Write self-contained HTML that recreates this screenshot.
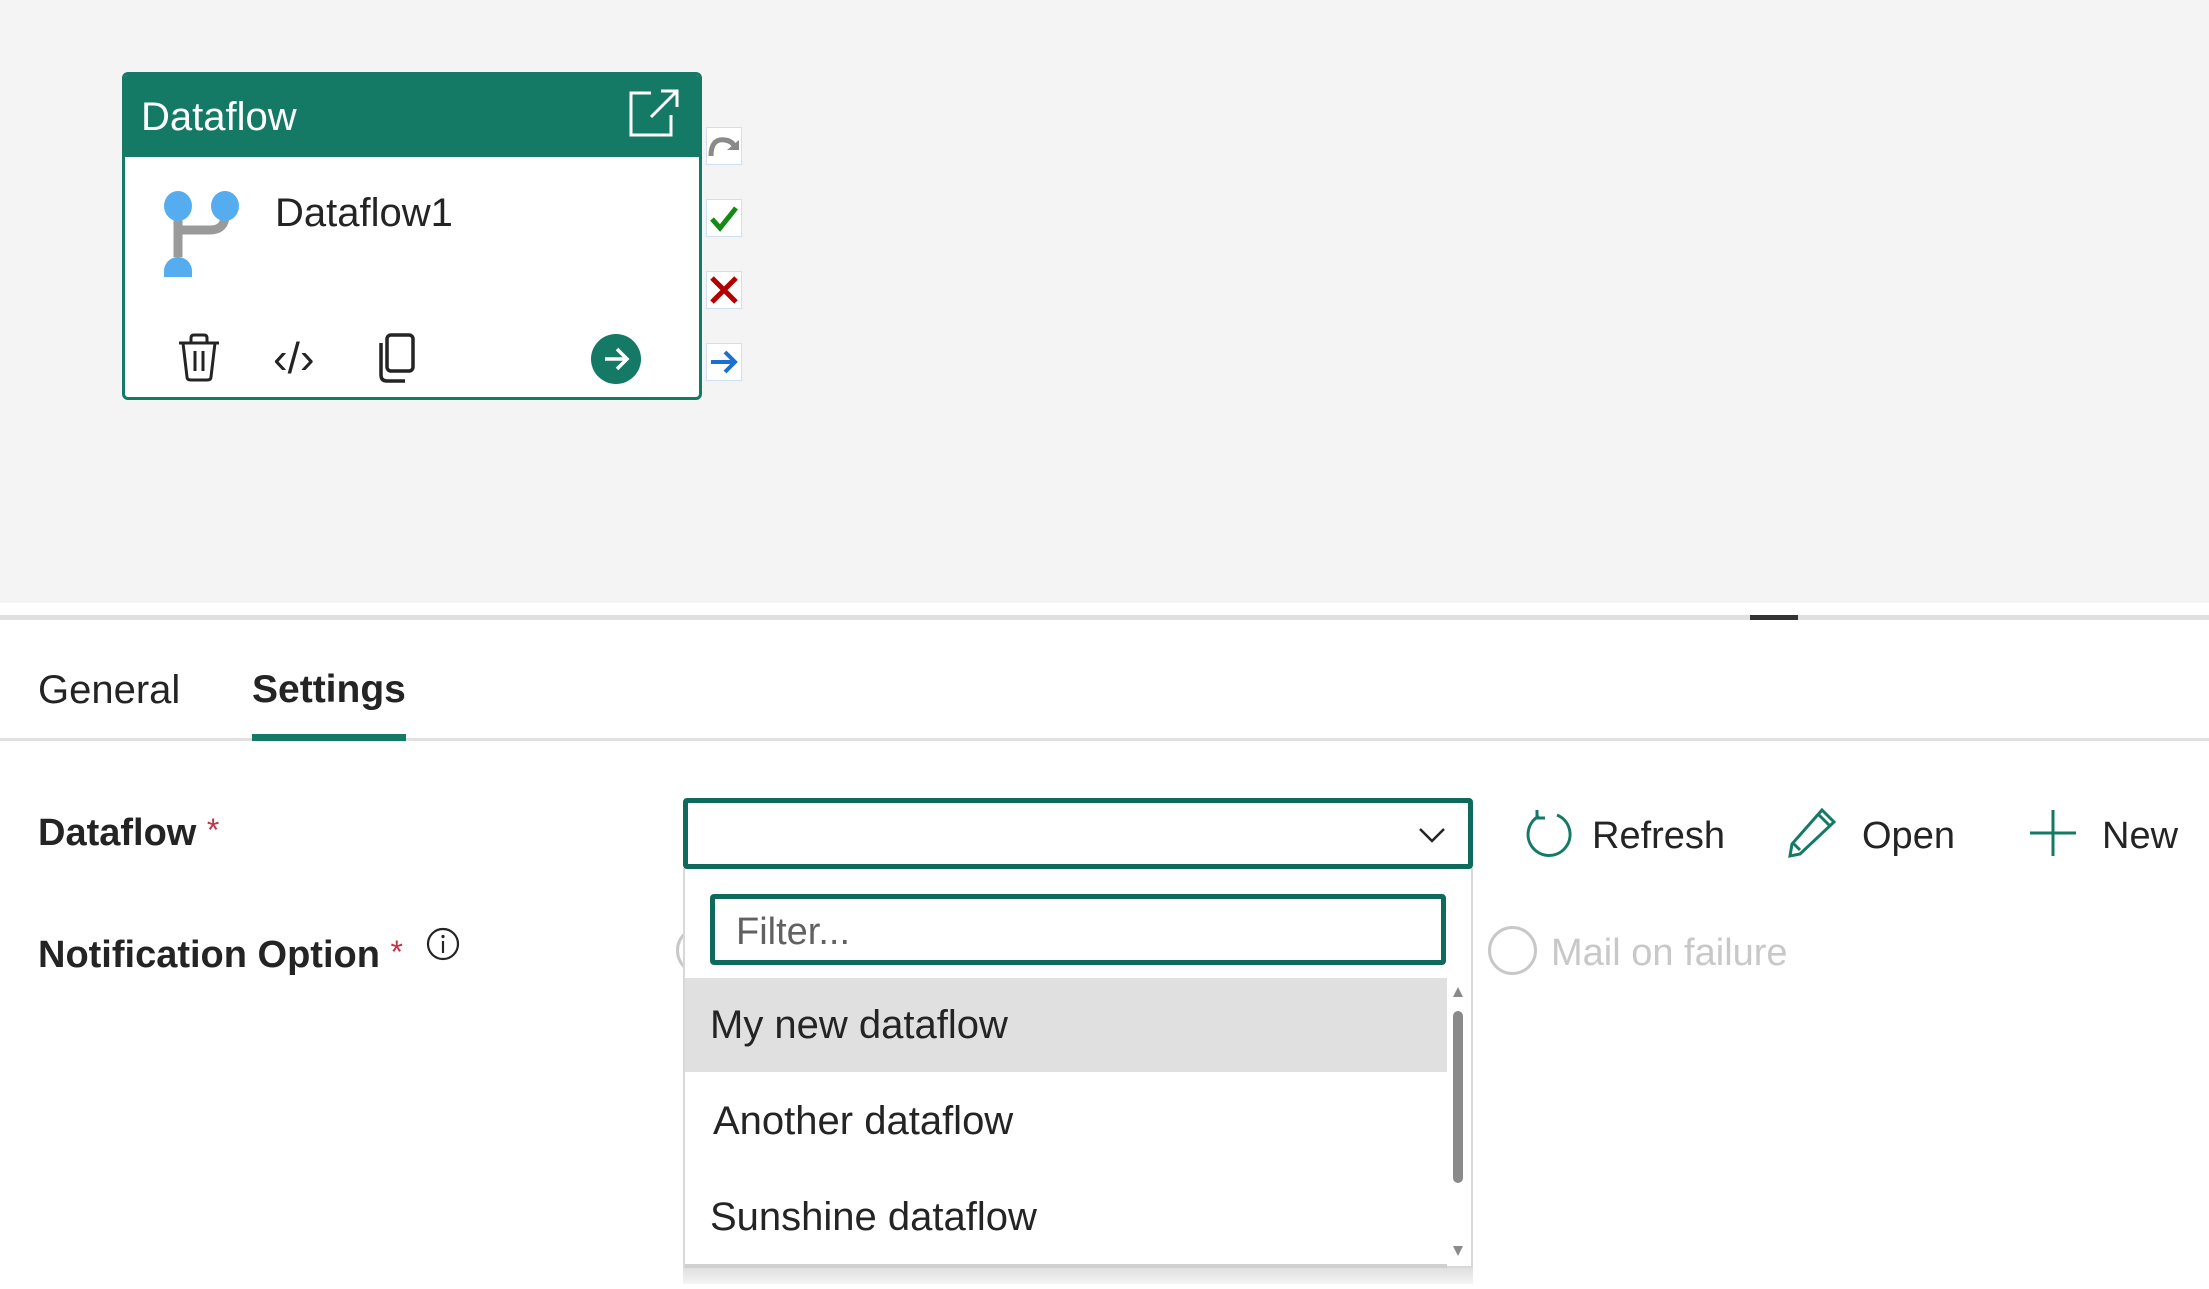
<!DOCTYPE html>
<html><head><meta charset="utf-8"><style>
*{margin:0;padding:0;box-sizing:border-box}
body{width:2209px;height:1289px;overflow:hidden;background:#fff;font-family:"Liberation Sans",sans-serif;position:relative;color:#242424}
.a{position:absolute}
.t{white-space:nowrap;line-height:1}
</style></head><body>
<div class="a" style="left:0;top:0;width:2209px;height:603px;background:#f4f4f4"></div>
<div class="a" style="left:0;top:615px;width:2209px;height:5px;background:#e0e0e0"></div>
<div class="a" style="left:1750px;top:615px;width:48px;height:5px;background:#333"></div>

<!-- card -->
<div class="a" style="left:122px;top:72px;width:580px;height:328px;border:3px solid #147a66;border-radius:6px;background:#fff;overflow:hidden">
 <div class="a" style="left:0;top:0;width:580px;height:82px;background:#147a66"></div>
 <div class="a t" style="left:16px;top:22px;font-size:40px;color:#fff">Dataflow</div>
 <svg class="a" style="left:502px;top:12px" width="56" height="52" viewBox="0 0 56 52"><path d="M24 6H4V48H44V28M24 30L50 4M34 4H50V20" fill="none" stroke="#fff" stroke-width="3"/></svg>
 <svg class="a" style="left:38px;top:110px" width="80" height="92" viewBox="0 0 80 92"><path d="M15 20V72M62 20V30Q62 45 47 45H15" fill="none" stroke="#9a9a9a" stroke-width="9"/><ellipse cx="15" cy="21" rx="14" ry="15" fill="#55adf0"/><ellipse cx="62" cy="21" rx="14" ry="15" fill="#55adf0"/><path d="M1 86a14 14 0 0 1 28 0v6H1z" fill="#55adf0"/></svg>
 <div class="a t" style="left:150px;top:118px;font-size:40px;color:#242424">Dataflow1</div>
 <svg class="a" style="left:52px;top:258px" width="44" height="50" viewBox="0 0 44 50"><path d="M2 10H42M14 10V5Q14 2 17 2H27Q30 2 30 5V10M6 10L10 44Q10 47 14 47H30Q34 47 34 44L38 10M18 18V38M26 18V38" fill="none" stroke="#242424" stroke-width="3"/></svg>
 <div class="a t" style="left:148px;top:262px;font-size:44px;color:#242424">&lsaquo;/&rsaquo;</div>
 <svg class="a" style="left:252px;top:258px" width="40" height="50" viewBox="0 0 40 50"><rect x="10" y="2" width="26" height="36" rx="4" fill="none" stroke="#242424" stroke-width="3.5"/><path d="M4 10V42Q4 48 10 48H28" fill="none" stroke="#242424" stroke-width="3.5"/></svg>
 <svg class="a" style="left:466px;top:259px" width="50" height="50" viewBox="0 0 50 50"><circle cx="25" cy="25" r="25" fill="#147a66"/><path d="M14 25H36M26 15L36 25L26 35" fill="none" stroke="#fff" stroke-width="3.5"/></svg>
</div>
<!-- side buttons -->
<div class="a" style="left:706px;top:127px;width:36px;height:38px;background:#fff;border:1px solid #cfe0f0"><svg width="34" height="36" viewBox="0 0 34 36"><path d="M4 28Q4 10 18 12Q26 13 28 20" fill="none" stroke="#8a8a8a" stroke-width="5"/><path d="M20 22H32V12z" fill="#8a8a8a"/></svg></div>
<div class="a" style="left:706px;top:199px;width:36px;height:38px;background:#fff;border:1px solid #cfe0f0"><svg width="34" height="36" viewBox="0 0 34 36"><path d="M5 19L13 28L29 8" fill="none" stroke="#138a13" stroke-width="5"/></svg></div>
<div class="a" style="left:706px;top:271px;width:36px;height:38px;background:#fff;border:1px solid #cfe0f0"><svg width="34" height="36" viewBox="0 0 34 36"><path d="M5 6L29 30M29 6L5 30" stroke="#b30000" stroke-width="5"/></svg></div>
<div class="a" style="left:706px;top:343px;width:36px;height:38px;background:#fff;border:1px solid #cfe0f0"><svg width="34" height="36" viewBox="0 0 34 36"><path d="M4 18H28M18 8L28 18L18 28" fill="none" stroke="#1b6fd0" stroke-width="4"/></svg></div>

<!-- tabs -->
<div class="a" style="left:0;top:738px;width:2209px;height:3px;background:#e0e0e0"></div>
<div class="a t" style="left:38px;top:670px;font-size:40px;color:#242424">General</div>
<div class="a t" style="left:252px;top:670px;font-size:39px;font-weight:bold;color:#242424">Settings</div>
<div class="a" style="left:252px;top:734px;width:154px;height:7px;background:#147a66"></div>

<div class="a t" style="left:38px;top:814px;font-size:38px;font-weight:bold">Dataflow <span style="color:#c4314b;font-weight:normal;font-size:32px;vertical-align:top">*</span></div>
<div class="a t" style="left:38px;top:936px;font-size:38px;font-weight:bold">Notification Option <span style="color:#c4314b;font-weight:normal;font-size:32px;vertical-align:top">*</span></div>
<svg class="a" style="left:425px;top:926px" width="36" height="36" viewBox="0 0 36 36"><circle cx="18" cy="18" r="15" fill="none" stroke="#242424" stroke-width="2.2"/><path d="M18 15V27" stroke="#242424" stroke-width="2.2"/><circle cx="18" cy="10.5" r="1.6" fill="#242424"/></svg>

<!-- radio -->
<div class="a" style="left:1488px;top:926px;width:49px;height:49px;border:3px solid #c8c8c8;border-radius:50%"></div>
<div class="a t" style="left:1551px;top:934px;font-size:38px;color:#c8c8c8">Mail on failure</div>
<div class="a" style="left:676px;top:926px;width:49px;height:49px;border:3px solid #c8c8c8;border-radius:50%"></div>

<!-- actions -->
<svg class="a" style="left:1524px;top:808px" width="50" height="52" viewBox="0 0 50 52"><path d="M15 8A21 21 0 1 0 33 7" fill="none" stroke="#147a66" stroke-width="3"/><path d="M13 2V10H21" fill="none" stroke="#147a66" stroke-width="3"/></svg>
<div class="a t" style="left:1592px;top:817px;font-size:38px">Refresh</div>
<svg class="a" style="left:1786px;top:806px" width="52" height="52" viewBox="0 0 52 52"><path d="M36 4L48 16L14 48L4 50L6 38Z M32 8L44 20M8 38L14 44" fill="none" stroke="#147a66" stroke-width="3"/></svg>
<div class="a t" style="left:1862px;top:817px;font-size:38px">Open</div>
<svg class="a" style="left:2028px;top:808px" width="50" height="50" viewBox="0 0 50 50"><path d="M25 2V48M2 25H48" stroke="#147a66" stroke-width="3"/></svg>
<div class="a t" style="left:2102px;top:817px;font-size:38px">New</div>

<!-- dropdown -->
<div class="a" style="left:683px;top:1266px;width:790px;height:18px;background:linear-gradient(#ddd,#f4f4f4)"></div>
<div class="a" style="left:683px;top:868px;width:790px;height:400px;background:#fff;border:2px solid #d8d8d8;border-top:none"></div>
<div class="a" style="left:683px;top:798px;width:790px;height:71px;border:5px solid #0e6b5c;border-radius:4px;background:#fff"></div>
<svg class="a" style="left:1418px;top:826px" width="28" height="18" viewBox="0 0 28 18"><path d="M2 3L14 15L26 3" fill="none" stroke="#242424" stroke-width="2.5"/></svg>
<div class="a" style="left:710px;top:894px;width:736px;height:71px;border:5px solid #0e6b5c;border-radius:4px;background:#fff"></div>
<div class="a t" style="left:736px;top:913px;font-size:38px;color:#616161">Filter...</div>
<div class="a" style="left:685px;top:978px;width:762px;height:94px;background:#e0e0e0"></div>
<div class="a t" style="left:710px;top:1005px;font-size:40px">My new dataflow</div>
<div class="a t" style="left:713px;top:1101px;font-size:40px">Another dataflow</div>
<div class="a t" style="left:710px;top:1197px;font-size:40px">Sunshine dataflow</div>
<div class="a" style="left:1453px;top:1011px;width:10px;height:172px;background:#8a8a8a;border-radius:5px"></div>
<svg class="a" style="left:1452px;top:986px" width="12" height="12"><path d="M6 1L11 11H1z" fill="#8a8a8a"/></svg>
<svg class="a" style="left:1452px;top:1245px" width="12" height="12"><path d="M6 11L11 1H1z" fill="#8a8a8a"/></svg>
<div class="a" style="left:685px;top:1264px;width:762px;height:4px;background:#d0d0d0"></div>
</body></html>
